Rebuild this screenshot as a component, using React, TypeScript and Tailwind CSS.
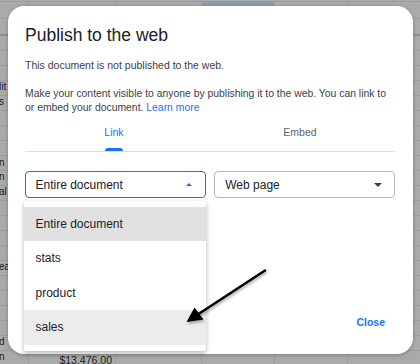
import React from "react";

type RowProps = {
  h: string;
  a?: string;
  b?: string;
  thick?: boolean;
  blue?: boolean;
  alignTop?: boolean;
};

function Row({ h, a, b, thick, blue, alignTop }: RowProps) {
  const line = thick ? "border-b-2 border-[#8e8e8e]" : "border-b border-[#9d9d9d]";
  return (
    <div className={`flex w-full shrink-0 ${h} ${line}`}>
      <div className={`w-[29px] shrink-0 border-r border-[#9d9d9d] overflow-hidden flex ${alignTop ? "items-start" : "items-center"}`}>
        {a ? <span className="whitespace-nowrap text-[10px] leading-[12px] text-[#1c1c1c] -ml-[1px]">{a}</span> : null}
      </div>
      <div className="w-[87px] shrink-0 border-r border-[#9d9d9d] flex items-start justify-end pr-[3px] pt-[3px]">
        {b ? <span className="whitespace-nowrap text-[10.5px] leading-[12px] text-[#1c1c1c]">{b}</span> : null}
      </div>
      <div className="w-[86px] shrink-0 border-r border-[#9d9d9d]" />
      <div className={`w-[73px] shrink-0 border-r border-[#9d9d9d] ${blue ? "bg-[#8e9ab0]" : ""}`} />
      <div className="w-[73px] shrink-0 border-r border-[#9d9d9d]" />
      <div className="flex-1" />
    </div>
  );
}

const bodyRows: { a?: string; b?: string; top?: boolean }[] = [
  {}, {}, {}, { a: "lit", top: true }, { a: "s", top: true }, {}, {}, {}, { a: "n" }, { a: "n", top: true },
  { a: "al", top: true }, {}, {}, {}, {}, { a: "ea", top: true }, {}, {}, {}, {}, { a: "d", top: true }, { a: "n", b: "$13,476.00", top: true },
];

export default function App() {
  return (
    <div className="relative w-[420px] h-[364px] overflow-hidden bg-[#aaaaaa] font-['Liberation_Sans',Arial,sans-serif]">
      {/* dimmed spreadsheet behind the dialog */}
      <div className="flex flex-col w-full">
        <Row h="h-[2px]" />
        <Row h="h-[17px]" blue />
        <Row h="h-[17px]" thick />
        {bodyRows.map((r, i) => (
          <Row key={i} h="h-[15px]" a={r.a} b={r.b} alignTop={r.top} />
        ))}
      </div>

      {/* dialog */}
      <div className="absolute left-[8px] top-[6px] w-[405px] h-[348px] rounded-[16px] bg-white shadow-[0_1px_4px_rgba(0,0,0,0.25)] flex flex-col pt-[19px] pl-[17px] pr-[18px] pb-[16px]">
        <h1 className="text-[17.5px] leading-[20px] text-[#202124]">Publish to the web</h1>
        <p className="mt-[13px] text-[10.5px] leading-[14px] text-[#3c4043]">
          This document is not published to the web.
        </p>
        <p className="mt-[15px] text-[10.4px] leading-[14px] text-[#3c4043]">
          Make your content visible to anyone by publishing it to the web. You can link to
          <br />
          or embed your document. <span className="text-[#1a73e8]">Learn more</span>
        </p>

        <div className="h-[37px] border-b border-[#dadce0]">
          <div className="flex h-full -ml-[4px] mr-[2px]">
            <div className="relative flex-1 flex items-center justify-center">
              <span className="text-[10.5px] font-medium text-[#1a73e8]">Link</span>
              <div className="absolute bottom-0 left-1/2 -translate-x-1/2 w-[18px] h-[3px] rounded-t-[3px] bg-[#1a73e8]" />
            </div>
            <div className="flex-1 flex items-center justify-center">
              <span className="text-[10.5px] font-medium text-[#5f6368]">Embed</span>
            </div>
          </div>
        </div>

        <div className="mt-[19px] flex gap-2">
          <div className="relative flex-1 h-[27px] rounded-[4px] border-[1.5px] border-[#1a73e8] flex items-center pl-[9.5px] pr-[13px]">
            <span className="text-[12px] text-[#202124]">Entire document</span>
            <span className="ml-auto w-0 h-0 border-l-[3px] border-r-[3px] border-b-[3px] border-l-transparent border-r-transparent border-b-[#1a73e8]" />
            <div className="absolute z-10 top-[calc(100%+3.5px)] left-[-2.5px] w-[182px] bg-white rounded-[2px] shadow-[0_2px_5px_rgba(0,0,0,0.3)] py-[6px]">
              <div className="h-[34.5px] flex items-center pl-[12px] bg-[#e1e1e1] text-[12px] text-[#202124]">Entire document</div>
              <div className="h-[34.5px] flex items-center pl-[12px] text-[12px] text-[#202124]">stats</div>
              <div className="h-[34.5px] flex items-center pl-[12px] text-[12px] text-[#202124]">product</div>
              <div className="h-[34.5px] flex items-center pl-[12px] bg-[#ececec] text-[12px] text-[#202124]">sales</div>
            </div>
          </div>
          <div className="flex-1 h-[27px] rounded-[4px] border border-[#b5b8bc] flex items-center pl-[10px] pr-[12px]">
            <span className="text-[12px] text-[#202124]">Web page</span>
            <span className="ml-auto w-0 h-0 border-l-[4px] border-r-[4px] border-t-[4px] border-l-transparent border-r-transparent border-t-[#3c4043]" />
          </div>
        </div>

        <div className="mt-auto flex justify-end">
          <button className="h-[30px] px-[10px] text-[10.5px] font-bold text-[#1a73e8]">Close</button>
        </div>
      </div>

      {/* annotation arrow */}
      <svg
        className="absolute left-0 top-0 z-20 pointer-events-none drop-shadow-[1px_2px_1px_rgba(0,0,0,0.3)]"
        width="420"
        height="364"
        viewBox="0 0 420 364"
      >
        <line x1="265" y1="270.5" x2="197" y2="315" stroke="#000" strokeWidth="2.6" strokeLinecap="round" />
        <polygon points="186.5,322 194.5,307.5 203.5,319.5" fill="#000" />
      </svg>
    </div>
  );
}
